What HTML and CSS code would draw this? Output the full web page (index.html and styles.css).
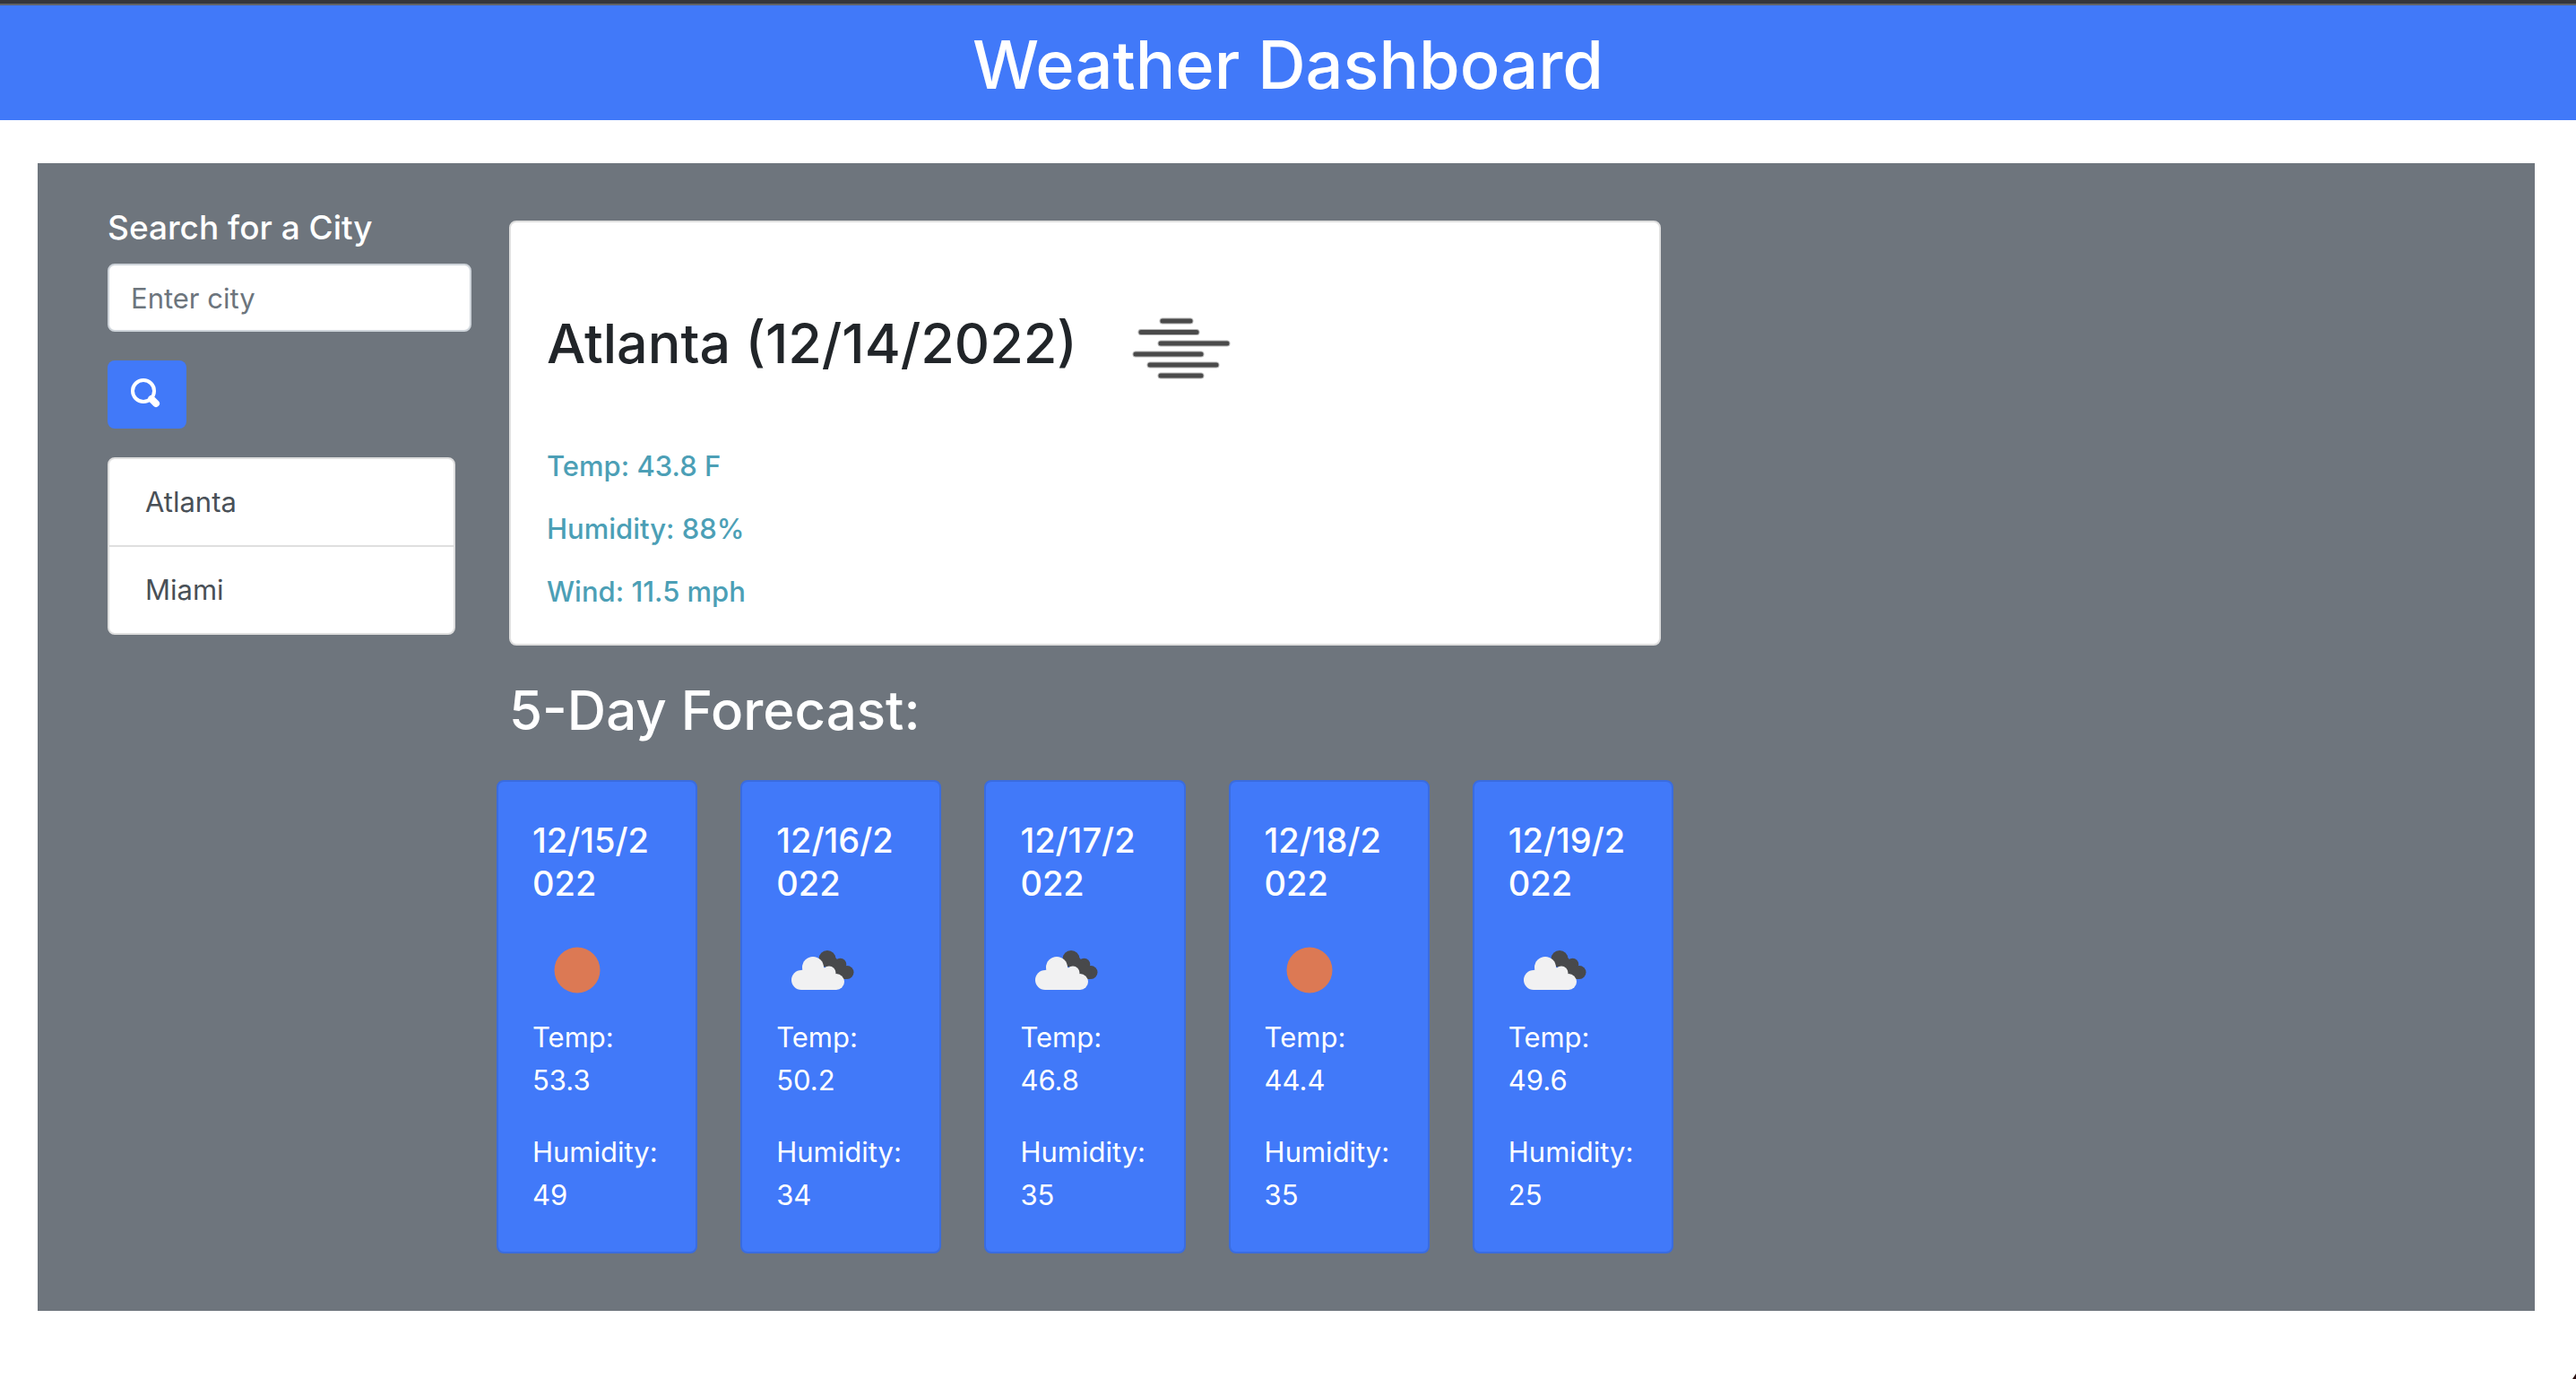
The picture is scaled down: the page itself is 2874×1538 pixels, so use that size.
FILE: index.html
```html
<!DOCTYPE html>
<html lang="en">
<head>
<meta charset="utf-8">
<meta name="viewport" content="width=device-width, initial-scale=1">
<title>Weather Dashboard</title>
<link rel="stylesheet" href="styles.css">
</head>
<body>
<svg class="sprite" aria-hidden="true">
  <symbol id="sun" viewBox="0 0 100 100"><circle cx="50" cy="50" r="25.500" fill="#dc7954"/></symbol>
  <symbol id="clouds" viewBox="0 0 100 100">
    <g fill="#48494b"><circle cx="57" cy="37.500" r="9.500"/><circle cx="71.500" cy="43.500" r="6.800"/><circle cx="79" cy="52.500" r="7.500"/><path d="M57 40L66 36L80 50L78 60H60Z"/></g>
    <g fill="#f1f1f2"><circle cx="41" cy="47" r="12"/><circle cx="28" cy="61" r="11"/><circle cx="59" cy="53" r="7.500"/><circle cx="67" cy="63" r="9"/><path d="M28 72V50L41 46H52L64 55L67 60V72Z"/></g>
  </symbol>
</svg>
<header class="banner"><h1 class="banner-title">Weather Dashboard</h1></header>
<main class="dashboard">
  <aside class="sidebar">
    <form class="search">
      <label class="search-label" for="city">Search for a City</label>
      <input class="search-input" id="city" type="text" placeholder="Enter city">
      <button class="search-button" type="button" aria-label="Search">
        <svg class="search-icon" viewBox="0 0 36 48" fill="none" stroke="#fff"><circle cx="16" cy="20" r="12" stroke-width="4"/><path d="M25 29l5 5" stroke-width="8" stroke-linecap="round"/></svg>
      </button>
    </form>
    <ul class="history">
      <li class="history-item">Atlanta</li>
      <li class="history-item">Miami</li>
    </ul>
  </aside>
  <div class="content">
    <section class="current">
      <h2 class="current-title">Atlanta (12/14/2022)
        <svg class="current-icon" viewBox="0 0 200 200" role="img" aria-label="Mist" stroke-linecap="round">
          <defs><path id="mist" d="M79 70H110M55 82.500H117M77 95H151M49 107H122M65 119H139M77 131H122"/></defs>
          <use href="#mist" stroke="#b5b5b5" stroke-width="7"/><use href="#mist" stroke="#4a4a4a" stroke-width="5"/>
        </svg></h2>
      <p class="current-stat">Temp: 43.8 F</p>
      <p class="current-stat">Humidity: 88%</p>
      <p class="current-stat">Wind: 11.5 mph</p>
    </section>
    <h2 class="forecast-title">5-Day Forecast:</h2>
    <section class="forecast">
      <article class="day">
        <h3 class="day-date">12/15/2022</h3>
        <svg class="day-icon" role="img" aria-label="Clear"><use href="#sun"/></svg>
        <p class="day-stat">Temp: 53.3</p>
        <p class="day-stat">Humidity: 49</p>
      </article>
      <article class="day">
        <h3 class="day-date">12/16/2022</h3>
        <svg class="day-icon" role="img" aria-label="Cloudy"><use href="#clouds"/></svg>
        <p class="day-stat">Temp: 50.2</p>
        <p class="day-stat">Humidity: 34</p>
      </article>
      <article class="day">
        <h3 class="day-date">12/17/2022</h3>
        <svg class="day-icon" role="img" aria-label="Cloudy"><use href="#clouds"/></svg>
        <p class="day-stat">Temp: 46.8</p>
        <p class="day-stat">Humidity: 35</p>
      </article>
      <article class="day">
        <h3 class="day-date">12/18/2022</h3>
        <svg class="day-icon" role="img" aria-label="Clear"><use href="#sun"/></svg>
        <p class="day-stat">Temp: 44.4</p>
        <p class="day-stat">Humidity: 35</p>
      </article>
      <article class="day">
        <h3 class="day-date">12/19/2022</h3>
        <svg class="day-icon" role="img" aria-label="Cloudy"><use href="#clouds"/></svg>
        <p class="day-stat">Temp: 49.6</p>
        <p class="day-stat">Humidity: 25</p>
      </article>
    </section>
  </div>
</main>
<div class="window-corner"></div>
</body>
</html>
```
FILE: styles.css
```css
* { box-sizing: border-box; }

body {
  margin: 0;
  background: #fff;
  color: #212529;
  font-family: Inter, "Liberation Sans", sans-serif;
  font-size: 31px;
  line-height: 48px;
}

h1, h2, h3, p, ul { margin: 0; padding: 0; font-weight: 500; }

.sprite { display: none; }

.banner {
  padding: 20px 16px 14px;
  border-top: 4px solid #35363a;
  background: #4179f9;
  box-shadow: inset 0 2px #5f6368;
  color: #fff;
  text-align: center;
}

.banner-title { font-size: 74px; line-height: 96px; }

.dashboard {
  display: grid;
  grid-template-columns: 406fr 1313fr 883fr;
  column-gap: 28px;
  margin: 48px 46px 0 42px;
  padding: 48px 50px 64px 78px;
  background: #6e757d;
}

.search {
  display: flex;
  flex-direction: column;
  align-items: flex-start;
}

.search-label {
  margin-bottom: 16px;
  color: #fff;
  font-size: 37px;
  font-weight: 500;
}

.search-input {
  width: 100%;
  height: 76px;
  padding: 12px 24px;
  border: 2px solid #ced4da;
  border-radius: 8px;
  background: #fff;
  color: #495057;
  font: inherit;
}

.search-input::placeholder { color: #6c757d; opacity: 1; }

.search-button {
  display: flex;
  height: 76px;
  margin: 32px 0;
  padding: 14px 28px 14px 24px;
  border: 0;
  border-radius: 8px;
  background: #4179f9;
}

.search-icon { width: 36px; height: 48px; }

.history {
  margin-right: 18px;
  border: 2px solid #dfdfdf;
  border-radius: 8px;
  background: #fff;
  color: #495057;
  list-style: none;
}

.history-item { padding: 24px 40px; font-weight: 400; }
.history-item + .history-item { border-top: 2px solid #dfdfdf; }

.content { padding-top: 16px; }

.current {
  margin: 0 14px 34px;
  padding: 40px 40px 38px;
  border: 2px solid #dfdfdf;
  border-radius: 8px;
  background: #fff;
}

.current-title {
  margin-bottom: 12px;
  font-size: 61px;
  line-height: 76px;
}

.current-icon { width: 200px; height: 200px; vertical-align: middle; }

.current-stat { color: #4c9fb6; line-height: 40px; }
.current-stat + .current-stat { margin-top: 30px; }

.forecast-title {
  margin: 0 14px 40px;
  color: #fff;
  font-size: 60px;
  line-height: 76px;
}

.forecast {
  display: grid;
  grid-template-columns: repeat(5, 1fr);
  gap: 48px;
}

.day {
  min-width: 0;
  padding: 41px 38px 39px;
  border: 2px solid #3a6cdf;
  border-radius: 8px;
  background: #4179f9;
  color: #fff;
}

.day-date {
  margin-bottom: 23px;
  font-size: 38px;
  line-height: 48px;
  overflow-wrap: anywhere;
}

.day-icon { display: block; width: 100px; height: 100px; margin-bottom: 1px; }
.day-stat { font-weight: 400; }
.day-stat + .day-stat { margin-top: 32px; }

.window-corner {
  position: fixed;
  right: 0;
  bottom: 0;
  width: 4px;
  height: 6px;
  background: #2a1010;
  clip-path: polygon(100% 0, 100% 100%, 0 100%);
}
```
